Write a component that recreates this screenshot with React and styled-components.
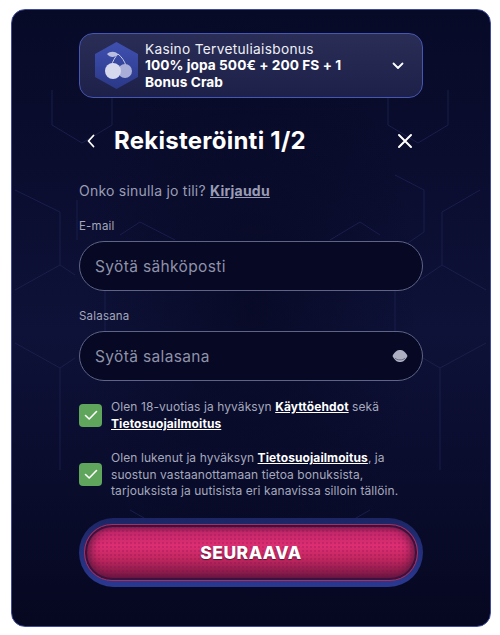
import React from "react";
import styled, { createGlobalStyle } from "styled-components";

const Global = createGlobalStyle`
  html, body { margin: 0; padding: 0; background: #fff; }
  body { font-family: Inter, "Liberation Sans", sans-serif; }
  * { box-sizing: border-box; }
`;

const Page = styled.div`
  width: 500px;
  height: 635px;
  padding: 9px 9px 8px 11px;
`;

const Panel = styled.section`
  position: relative;
  height: 618px;
  width: 480px;
  padding: 23px 67px 0;
  border: 1px solid #3f4c9c;
  border-radius: 14px;
  overflow: hidden;
  background:
    radial-gradient(ellipse 170px 300px at 50% 48%, rgba(6, 8, 34, 0.75), transparent),
    linear-gradient(180deg, #070a27 0%, #0a0d2e 25%, #0e1238 52%, #0a0d2e 72%, #060821 100%);
  display: flex;
  flex-direction: column;
  color: #fff;
`;

const HexBackdrop = styled.svg`
  position: absolute;
  inset: 0;
  width: 100%;
  height: 100%;
  pointer-events: none;
`;

const Content = styled.div`
  position: relative;
  display: flex;
  flex-direction: column;
`;

const Banner = styled.div`
  height: 65px;
  border: 1px solid #4656b4;
  border-radius: 14px;
  background: linear-gradient(180deg, #2a2d55 0%, #1d2048 100%);
  display: flex;
  align-items: center;
  padding: 0 18px 0 15px;
  gap: 7px;
`;

const BannerText = styled.div`
  flex: 1;
  font-size: 13.7px;
  line-height: 16.5px;
`;

const BannerTitle = styled.div`
  font-weight: 400;
  color: #eef0f8;
  letter-spacing: 0.3px;
`;

const BannerOffer = styled.div`
  font-weight: 700;
  letter-spacing: 0.05px;
  max-width: 210px;
`;

const Header = styled.header`
  display: flex;
  align-items: center;
  height: 32px;
  margin-top: 27px;
  padding: 0 10px 0 7px;
`;

const Title = styled.h1`
  flex: 1;
  margin: 0 0 0 18px;
  font-size: 24px;
  line-height: 32px;
  font-weight: 700;
  letter-spacing: 0.25px;
`;

const HeaderIcon = styled.svg`
  display: block;
  flex: none;
  fill: none;
  stroke: #fff;
  stroke-linecap: round;
  stroke-linejoin: round;
`;

const LoginLine = styled.p`
  margin: 25px 0 0;
  font-size: 14px;
  line-height: 18px;
  letter-spacing: 0.22px;
  color: #9a9db5;
`;

const LoginLink = styled.a`
  font-weight: 700;
  color: #9a9db5;
  text-decoration: underline;
`;

const FieldLabel = styled.label`
  display: block;
  margin-top: ${(p) => p.$top}px;
  margin-bottom: 8px;
  font-size: 11.5px;
  line-height: 14px;
  letter-spacing: 0.2px;
  color: #a4a7bb;
`;

const InputBox = styled.div`
  height: 50px;
  border: 1px solid #5f6486;
  border-radius: 25px;
  background: #060824;
  display: flex;
  align-items: center;
  padding: 0 14px 0 15px;
`;

const InputField = styled.input`
  flex: 1;
  min-width: 0;
  border: 0;
  outline: 0;
  padding: 0;
  background: transparent;
  font: 400 15.5px Inter, sans-serif;
  letter-spacing: 0.35px;
  color: #fff;
  &::placeholder { color: #8f92a8; opacity: 1; }
`;

const CheckRow = styled.div`
  display: flex;
  align-items: center;
  gap: 9px;
  margin-top: ${(p) => p.$top}px;
`;

const CheckBox = styled.span`
  flex: none;
  width: 23px;
  height: 23px;
  border-radius: 4px;
  background: #5fa65c;
  display: flex;
  align-items: center;
  justify-content: center;
`;

const CheckText = styled.p`
  margin: 0;
  max-width: 296px;
  font-size: 12px;
  line-height: 16.5px;
  color: #a6a9bd;
  letter-spacing: 0.08px;
`;

const TextLink = styled.a`
  font-weight: 700;
  color: #fff;
  letter-spacing: 0.1px;
  text-decoration: underline;
`;

const ButtonFrame = styled.div`
  margin-top: 18px;
  height: 69px;
  border-radius: 35px;
  padding: 6px 5px;
  background: linear-gradient(180deg, #1c2665 0%, #2a3890 100%);
`;

const NextButton = styled.button`
  width: 100%;
  height: 100%;
  border: 1px solid #a3305f;
  border-radius: 28px;
  padding: 0;
  color: #fff;
  font: 800 17.5px Inter, sans-serif;
  letter-spacing: 0.45px;
  text-shadow: 0 1px 1px #5a1030;
  background:
    radial-gradient(circle, rgba(120, 10, 70, 0.22) 1px, transparent 1.2px) 0 0 / 4px 4px,
    linear-gradient(180deg, #7a1d4b 0%, #c4286a 14%, #dd2e72 38%, #c0265f 62%, #8c1c4b 85%, #5f1540 100%);
  box-shadow: inset 0 0 0 2px #3a1240, inset 10px 0 10px -5px #5e1740, inset -10px 0 10px -5px #5e1740;
`;

const hexLines = [
  "M388 90 L388 125 L418 143 L448 125 L448 90",
  "M480 190 L442 212 L442 265 L486 290",
  "M442 265 L420 280",
  "M424 190 L424 232 L405 245 M395 175 L424 190",
  "M395 290 L395 331",
  "M423 358 L440 368 L486 343 M440 368 L440 470",
  "M52 90 L52 125 L82 143 L112 125 L112 90",
  "M15 190 L60 212 L60 265 L15 290",
  "M60 265 L75 275 M77 200 L77 240",
  "M60 368 L15 343 M60 368 L75 358 M60 368 L60 470",
  "M105 290 L105 331",
  "M120 235 L140 222 L175 240 M380 235 L360 222 L330 240",
  "M130 510 L165 530 M370 510 L335 530",
];

function CherryBadge() {
  return (
    <svg width="43" height="47" viewBox="0 0 43 47" style={{ flex: "none" }}>
      <defs>
        <linearGradient id="hx" x1="0" y1="0" x2="0" y2="1">
          <stop offset="0" stopColor="#3f50b0" />
          <stop offset="1" stopColor="#2b3888" />
        </linearGradient>
      </defs>
      <path d="M21.5 0 L43 12 L43 35 L21.5 47 L0 35 L0 12Z" fill="url(#hx)" />
      <path d="M16 24 C18 19 20 15 23 12 C27 15 30 20 31 24" fill="none" stroke="#c9cde8" strokeWidth="1" />
      <path d="M12 12 C15 9 20 9 23 12 C20 16 15 16 12 12Z" fill="#b9bedf" />
      <circle cx="30" cy="29" r="7" fill="#a9aed8" />
      <circle cx="18" cy="29" r="8" fill="#d6d9ee" />
    </svg>
  );
}

function Check() {
  return (
    <CheckBox>
      <HeaderIcon width="14" height="11" viewBox="0 0 14 11" strokeWidth="1.6">
        <path d="M1.5 5.5 L5.2 9 L12.5 1.5" />
      </HeaderIcon>
    </CheckBox>
  );
}

export default function App() {
  return (
    <Page>
      <Global />
      <Panel>
        <HexBackdrop viewBox="12 10 478 616">
          <path d={hexLines.join(" ")} fill="none" stroke="#191e4c" strokeWidth="1" />
        </HexBackdrop>
        <Content>
          <Banner>
            <CherryBadge />
            <BannerText>
              <BannerTitle>Kasino Tervetuliaisbonus</BannerTitle>
              <BannerOffer>100% jopa 500€ + 200 FS + 1 Bonus Crab</BannerOffer>
            </BannerText>
            <HeaderIcon width="12" height="8" viewBox="0 0 12 8" strokeWidth="1.8">
              <path d="M1.5 1.5 L6 6 L10.5 1.5" />
            </HeaderIcon>
          </Banner>

          <Header>
            <HeaderIcon width="10" height="14" viewBox="0 0 10 14" strokeWidth="1.8">
              <path d="M7.5 1.5 L2.5 7 L7.5 12.5" />
            </HeaderIcon>
            <Title>Rekisteröinti 1/2</Title>
            <HeaderIcon width="16" height="16" viewBox="0 0 16 16" strokeWidth="2">
              <path d="M2 2 L14 14 M14 2 L2 14" />
            </HeaderIcon>
          </Header>

          <LoginLine>
            Onko sinulla jo tili? <LoginLink>Kirjaudu</LoginLink>
          </LoginLine>

          <FieldLabel $top={19}>E-mail</FieldLabel>
          <InputBox>
            <InputField placeholder="Syötä sähköposti" />
          </InputBox>

          <FieldLabel $top={18}>Salasana</FieldLabel>
          <InputBox>
            <InputField placeholder="Syötä salasana" />
            <svg width="16" height="14" viewBox="0 0 16 14">
              <path d="M0.5 7 C3 2 5.5 1 8 1 C10.5 1 13 2 15.5 7 C13 12 10.5 13 8 13 C5.5 13 3 12 0.5 7Z" fill="#aeb0c2" />
              <path d="M3 9 C5 11.5 11 11.5 13 9" fill="none" stroke="#5f6278" strokeWidth="0.9" />
            </svg>
          </InputBox>

          <CheckRow $top={18}>
            <Check />
            <CheckText>
              Olen 18-vuotias ja hyväksyn <TextLink>Käyttöehdot</TextLink> sekä{" "}
              <TextLink>Tietosuojailmoitus</TextLink>
            </CheckText>
          </CheckRow>

          <CheckRow $top={18}>
            <Check />
            <CheckText>
              Olen lukenut ja hyväksyn <TextLink>Tietosuojailmoitus</TextLink>, ja suostun vastaanottamaan tietoa
              bonuksista, tarjouksista ja uutisista eri kanavissa silloin tällöin.
            </CheckText>
          </CheckRow>

          <ButtonFrame>
            <NextButton>SEURAAVA</NextButton>
          </ButtonFrame>
        </Content>
      </Panel>
    </Page>
  );
}
